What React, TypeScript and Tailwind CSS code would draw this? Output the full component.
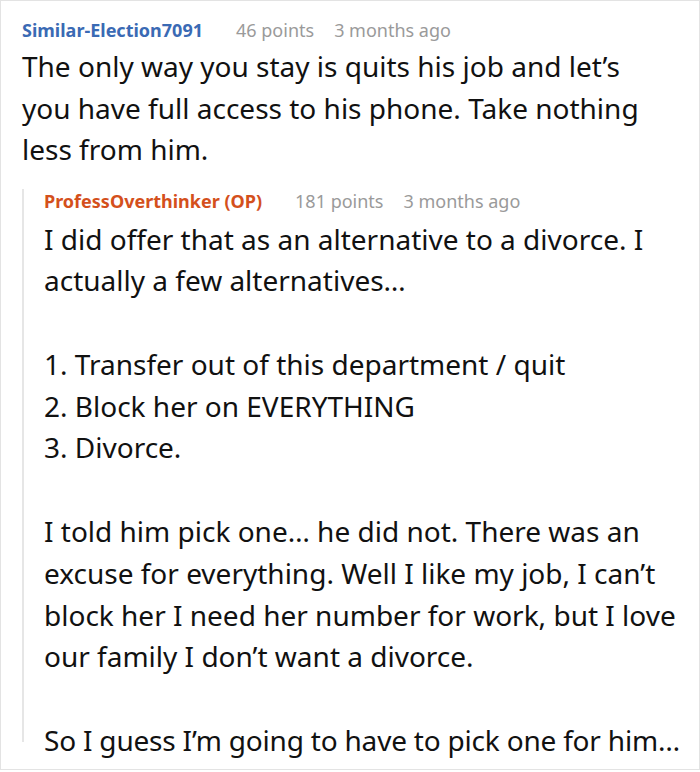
import React from "react";

function Meta({ name, color, points, time }: { name: string; color: string; points: string; time: string }) {
  return (
    <div className="flex items-baseline gap-[33px] text-[18px] leading-[24px]">
      <span className={`font-bold ${color}`}>{name}</span>
      <span className="flex gap-[20px] text-[#9a9a9a]">
        <span>{points}</span>
        <span>{time}</span>
      </span>
    </div>
  );
}

export default function App() {
  return (
    <div
      className="w-[700px] h-[772px] bg-white overflow-hidden"
      style={{ fontFamily: '"Noto Sans", "Open Sans", sans-serif' }}
    >
      <div className="h-[770px] border border-[#e3e3e3] pl-[21px] pr-4 pt-[17px]">
        <Meta name="Similar-Election7091" color="text-[#3a6ab4]" points="46 points" time="3 months ago" />
        <div className="text-[28px] leading-[41.5px] text-[#111] mt-[4px] max-w-[645px]">
          <p>The only way you stay is quits his job and let’s you have full access to his phone. Take nothing less from him.</p>
        </div>
        <div className="mt-[18px] border-l-2 border-[#e6e6e6] pl-[20px] pt-[0px] h-[553px]">
          <Meta name="ProfessOverthinker (OP)" color="text-[#d4501c]" points="181 points" time="3 months ago" />
          <div className="text-[28px] leading-[41.8px] text-[#111] mt-[6px] flex flex-col gap-[41.8px]">
            <p>I did offer that as an alternative to a divorce. I actually a few alternatives…</p>
            <p>
              1. Transfer out of this department / quit
              <br />
              2. Block her on EVERYTHING
              <br />
              3. Divorce.
            </p>
            <p>I told him pick one… he did not. There was an excuse for everything. Well I like my job, I can’t block her I need her number for work, but I love our family I don’t want a divorce.</p>
            <p className="whitespace-nowrap tracking-[-0.2px]">So I guess I’m going to have to pick one for him…</p>
          </div>
        </div>
      </div>
    </div>
  );
}
